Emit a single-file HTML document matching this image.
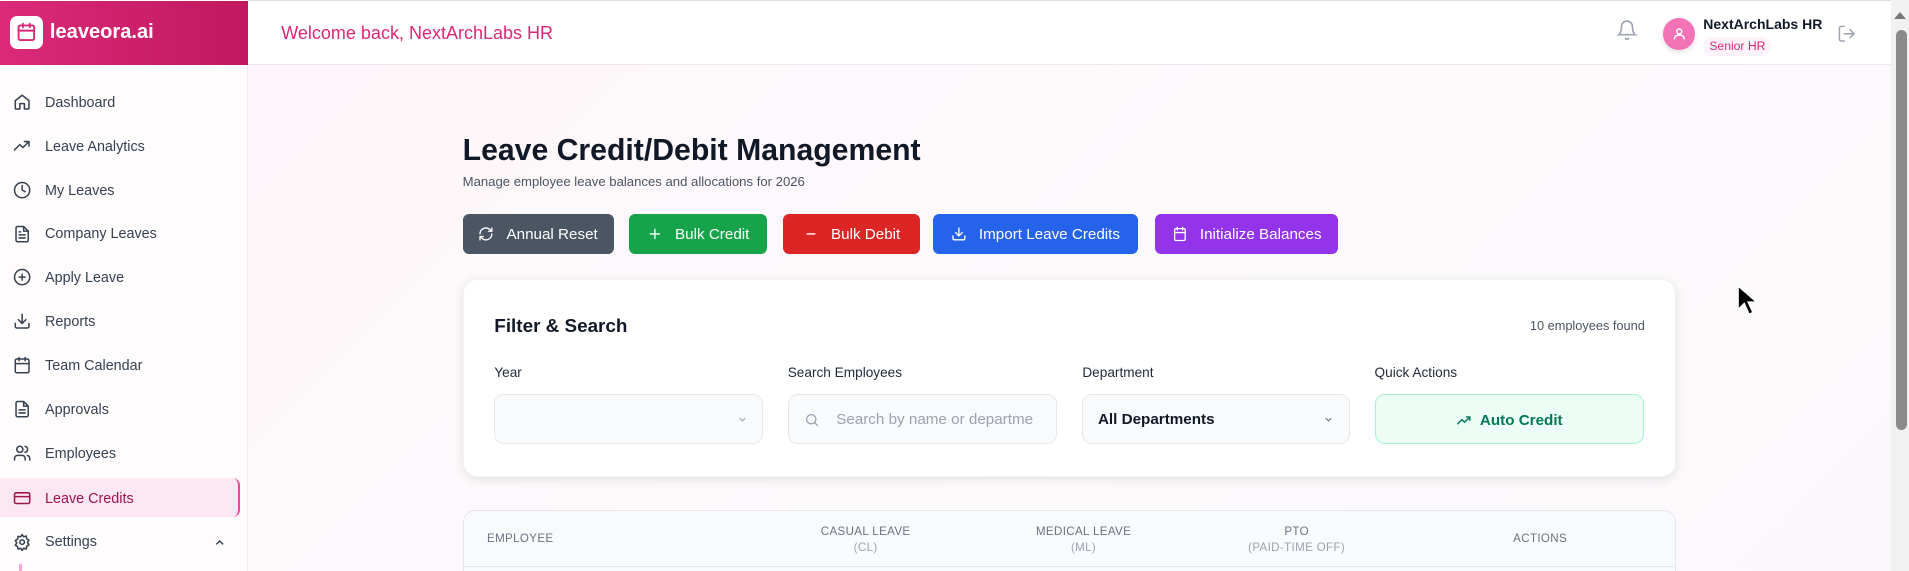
<!DOCTYPE html>
<html><head><meta charset="utf-8"><style>
*{box-sizing:border-box;margin:0;padding:0}
html,body{width:1909px;height:571px;overflow:hidden;background:#fff;font-family:"Liberation Sans",sans-serif}
#w{zoom:1.2175;width:1568px;height:469px;position:relative;overflow:hidden;background:linear-gradient(135deg,#fdf5f9,#fdfafc 60%,#fbf8fb)}
.abs{position:absolute}
.side{left:0;top:0;width:204px;height:469px;background:#fefcfd;border-right:1px solid #f3e8ee}
.logo{left:0;top:1px;width:204px;height:52px;background:linear-gradient(90deg,#db2a7a,#c0185e)}
.li{position:absolute;left:0;width:197px;height:32px;display:flex;align-items:center;font-size:11.8px;color:#374151}
.li svg{position:absolute;left:11px;width:15px;height:15px;fill:none;stroke:#374151;stroke-width:2;stroke-linecap:round;stroke-linejoin:round}
.li span{position:absolute;left:37px;top:10px}
.btn{position:absolute;top:176px;height:33px;border-radius:5px;color:#fff;font-size:12.5px;display:flex;align-items:center;justify-content:center;gap:10px}
.btn svg{width:13px;height:13px;fill:none;stroke:#fff;stroke-width:2;stroke-linecap:round;stroke-linejoin:round}
.lbl{position:absolute;top:300px;font-size:11.2px;color:#1f2937}
.inp{position:absolute;top:324px;height:41px;border:1px solid #e5e7eb;background:#f9fafb;border-radius:8px}
.th{position:absolute;font-size:9.5px;color:#6b7280;text-align:center;letter-spacing:.3px;line-height:13px}
</style></head><body><div id="w">
<div class="abs" style="left:0;top:0;width:1568px;height:1px;background:#d9dde1"></div>
<div class="abs side"></div>
<div class="abs logo"></div>
<div class="abs" style="left:8px;top:13px;width:27px;height:27px;background:#fff;border-radius:6px"></div>
<svg class="abs" style="left:13px;top:18px" width="17" height="17" viewBox="0 0 24 24" fill="none" stroke="#db2777" stroke-width="2.2" stroke-linecap="round"><rect x="3" y="4" width="18" height="17" rx="2"/><path d="M8 2v4M16 2v4M3 10h18"/></svg>
<div class="abs" style="left:41px;top:17px;color:#fff;font-size:16.5px;font-weight:bold">leaveora.ai</div>
<div class="abs" style="left:204px;top:1px;width:1349px;height:52px;background:#fff;border-bottom:1px solid #f3e6ec"></div>
<div class="abs" style="left:231px;top:19px;color:#db2777;font-size:14.8px">Welcome back, NextArchLabs HR</div>
<svg class="abs" style="left:1327px;top:15px" width="18" height="20" viewBox="0 0 24 24" fill="none" stroke="#9ca3af" stroke-width="1.8" stroke-linecap="round"><path d="M6 8a6 6 0 0 1 12 0c0 7 3 9 3 9H3s3-2 3-9M10.3 21a1.9 1.9 0 0 0 3.4 0"/></svg>
<div class="abs" style="left:1366px;top:15px;width:26px;height:26px;border-radius:50%;background:#f472b6;box-shadow:0 2px 5px rgba(0,0,0,.12)"></div>
<svg class="abs" style="left:1373px;top:21px" width="12" height="13" viewBox="0 0 24 24" fill="none" stroke="#fff" stroke-width="2.4"><circle cx="12" cy="8" r="4"/><path d="M4 21v-1a6 6 0 0 1 6-6h4a6 6 0 0 1 6 6v1"/></svg>
<div class="abs" style="left:1399px;top:13px;font-size:11.5px;color:#111827;font-weight:bold">NextArchLabs HR</div>
<div class="abs" style="left:1399px;top:30px;width:56px;height:16px;border-radius:8px;background:#fdf2f8;color:#db2777;font-size:10px;text-align:center;line-height:16px">Senior HR</div>
<svg class="abs" style="left:1509px;top:20px" width="16" height="16" viewBox="0 0 24 24" fill="none" stroke="#9ca3af" stroke-width="1.8" stroke-linecap="round" stroke-linejoin="round"><path d="M9 21H5a2 2 0 0 1-2-2V5a2 2 0 0 1 2-2h4M16 17l5-5-5-5M21 12H9"/></svg>
<div class="abs" style="left:1553px;top:0;width:15px;height:469px;background:#f1f1f1"></div>
<div class="abs" style="left:1557px;top:25px;width:9px;height:328px;border-radius:5px;background:#8a8a8a"></div>
<div class="abs" style="left:1556px;top:10px;width:0;height:0;border-left:5px solid transparent;border-right:5px solid transparent;border-bottom:6px solid #777"></div>

<div class="li" style="top:68px"><svg viewBox="0 0 24 24"><path d="M3 10l9-7 9 7v10a1 1 0 0 1-1 1h-5v-7H9v7H4a1 1 0 0 1-1-1z"/></svg><span>Dashboard</span></div>
<div class="li" style="top:104px"><svg viewBox="0 0 24 24"><path d="M2 17l7-7 4 4 8-8M15 6h6v6"/></svg><span>Leave Analytics</span></div>
<div class="li" style="top:140px"><svg viewBox="0 0 24 24"><circle cx="12" cy="12" r="10"/><path d="M12 6v6l4 2"/></svg><span>My Leaves</span></div>
<div class="li" style="top:176px"><svg viewBox="0 0 24 24"><path d="M14 2H6a2 2 0 0 0-2 2v16a2 2 0 0 0 2 2h12a2 2 0 0 0 2-2V8zM14 2v6h6M8 13h8M8 17h8M8 9h2"/></svg><span>Company Leaves</span></div>
<div class="li" style="top:212px"><svg viewBox="0 0 24 24"><circle cx="12" cy="12" r="10"/><path d="M12 8v8M8 12h8"/></svg><span>Apply Leave</span></div>
<div class="li" style="top:248px"><svg viewBox="0 0 24 24"><path d="M21 15v4a2 2 0 0 1-2 2H5a2 2 0 0 1-2-2v-4M7 10l5 5 5-5M12 15V3"/></svg><span>Reports</span></div>
<div class="li" style="top:284px"><svg viewBox="0 0 24 24"><rect x="3" y="4" width="18" height="18" rx="2"/><path d="M16 2v4M8 2v4M3 10h18"/></svg><span>Team Calendar</span></div>
<div class="li" style="top:320px"><svg viewBox="0 0 24 24"><path d="M14 2H6a2 2 0 0 0-2 2v16a2 2 0 0 0 2 2h12a2 2 0 0 0 2-2V8zM14 2v6h6M8 13h8M8 17h8"/></svg><span>Approvals</span></div>
<div class="li" style="top:356px"><svg viewBox="0 0 24 24"><circle cx="9" cy="7" r="4"/><path d="M2 21v-2a4 4 0 0 1 4-4h6a4 4 0 0 1 4 4v2M16 3.1a4 4 0 0 1 0 7.8M22 21v-2a4 4 0 0 0-3-3.9"/></svg><span>Employees</span></div>
<div class="li" style="top:393px;background:#fce7f3;border-right:2px solid #ec4899;border-radius:0 6px 6px 0;color:#9d174d"><svg viewBox="0 0 24 24" style="stroke:#9d174d"><rect x="2" y="5" width="20" height="14" rx="2"/><path d="M2 10h20"/></svg><span>Leave Credits</span></div>
<div class="li" style="top:429px"><svg viewBox="0 0 24 24"><circle cx="12" cy="12" r="3"/><path d="M12 2l2 3 3.5-1 .5 3.5 3 2-2 3 2 3-3 2-.5 3.5-3.5-1-2 3-2-3-3.5 1L6 18l-3-2 2-3-2-3 3-2 .5-3.5L10 5z"/></svg><span>Settings</span></div>
<svg class="abs" style="left:175px;top:440px" width="11" height="11" viewBox="0 0 24 24" fill="none" stroke="#374151" stroke-width="2.5"><path d="M6 15l6-6 6 6"/></svg>
<div class="abs" style="left:16px;top:463px;width:2px;height:6px;background:#f9a8d4"></div>

<div class="abs" style="left:380px;top:110px;font-size:24.8px;font-weight:bold;color:#111827">Leave Credit/Debit Management</div>
<div class="abs" style="left:380px;top:143px;font-size:10.8px;color:#4b5563">Manage employee leave balances and allocations for 2026</div>

<div class="btn" style="left:380px;width:124px;background:#4b5563"><svg viewBox="0 0 24 24"><path d="M21 12a9 9 0 0 1-15 6.7L3 16M3 12a9 9 0 0 1 15-6.7L21 8M21 3v5h-5M3 21v-5h5"/></svg>Annual Reset</div>
<div class="btn" style="left:517px;width:113px;background:#16a34a"><svg viewBox="0 0 24 24"><path d="M12 5v14M5 12h14"/></svg>Bulk Credit</div>
<div class="btn" style="left:643px;width:113px;background:#dc2626"><svg viewBox="0 0 24 24"><path d="M6 12h12"/></svg>Bulk Debit</div>
<div class="btn" style="left:766px;width:169px;background:#2563eb"><svg viewBox="0 0 24 24"><path d="M21 15v4a2 2 0 0 1-2 2H5a2 2 0 0 1-2-2v-4M7 10l5 5 5-5M12 15V3"/></svg>Import Leave Credits</div>
<div class="btn" style="left:949px;width:150px;background:#9333ea"><svg viewBox="0 0 24 24"><rect x="4" y="4" width="16" height="18" rx="2"/><path d="M16 2v4M8 2v4M4 10h16"/></svg>Initialize Balances</div>

<div class="abs" style="left:380px;top:229px;width:997px;height:163px;background:#fff;border-radius:12px;box-shadow:0 2px 8px rgba(0,0,0,.1);border:1px solid #f3f4f6"></div>
<div class="abs" style="left:406px;top:259px;font-size:15.5px;font-weight:bold;color:#111827">Filter &amp; Search</div>
<div class="abs" style="left:1200px;top:261px;width:151px;text-align:right;font-size:10.5px;color:#4b5563">10 employees found</div>
<div class="lbl" style="left:406px">Year</div>
<div class="lbl" style="left:647px">Search Employees</div>
<div class="lbl" style="left:889px">Department</div>
<div class="lbl" style="left:1129px">Quick Actions</div>
<div class="inp" style="left:406px;width:221px"></div>
<svg class="abs" style="left:605px;top:340px" width="9" height="9" viewBox="0 0 24 24" fill="none" stroke="#9ca3af" stroke-width="2.5"><path d="M6 9l6 6 6-6"/></svg>
<div class="inp" style="left:647px;width:221px;overflow:hidden"><span class="abs" style="left:39px;top:13px;font-size:12.5px;color:#9ca3af;white-space:nowrap">Search by name or departme</span></div>
<svg class="abs" style="left:660px;top:338px" width="13" height="13" viewBox="0 0 24 24" fill="none" stroke="#9ca3af" stroke-width="2"><circle cx="11" cy="11" r="7"/><path d="M21 21l-5-5"/></svg>
<div class="inp" style="left:889px;width:220px"><span class="abs" style="left:12px;top:13px;font-size:12.5px;font-weight:bold;color:#111827">All Departments</span></div>
<svg class="abs" style="left:1087px;top:340px" width="9" height="9" viewBox="0 0 24 24" fill="none" stroke="#6b7280" stroke-width="2.5"><path d="M6 9l6 6 6-6"/></svg>
<div class="inp" style="left:1129px;width:221px;background:#ecfdf5;border-color:#a7f3d0;color:#047857;font-size:12.5px;font-weight:bold;display:flex;align-items:center;justify-content:center;gap:7px;padding-top:2px"><svg width="13" height="13" viewBox="0 0 24 24" fill="none" stroke="#047857" stroke-width="2.2"><path d="M2 17l7-7 4 4 8-8M15 6h6v6"/></svg>Auto Credit</div>

<div class="abs" style="left:380px;top:419px;width:997px;height:60px;background:#f9fafb;border:1px solid #e5e7eb;border-radius:10px 10px 0 0"></div>
<div class="abs" style="left:381px;top:465px;width:995px;height:1px;background:#e5e7eb"></div>
<div class="th" style="left:400px;top:437px">EMPLOYEE</div>
<div class="th" style="left:651px;top:431px;width:120px">CASUAL LEAVE<br><span style="color:#9ca3af">(CL)</span></div>
<div class="th" style="left:830px;top:431px;width:120px">MEDICAL LEAVE<br><span style="color:#9ca3af">(ML)</span></div>
<div class="th" style="left:1005px;top:431px;width:120px">PTO<br><span style="color:#9ca3af">(PAID-TIME OFF)</span></div>
<div class="th" style="left:1205px;top:437px;width:120px">ACTIONS</div>

<svg class="abs" style="left:1427px;top:234px" width="16" height="26" viewBox="0 0 16 26"><path d="M1 1v19l5-5 4 9 3-1.5-4-8.5h7z" fill="#000" stroke="#fff" stroke-width="1"/></svg>
</div></body></html>
